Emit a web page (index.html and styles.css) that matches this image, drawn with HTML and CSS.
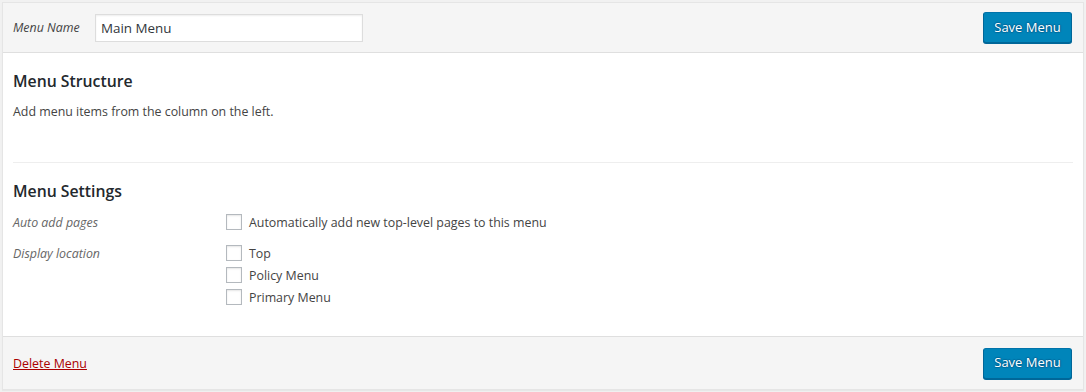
FILE: index.html
```html
<!DOCTYPE html>
<html>
<head>
<meta charset="utf-8">
<link rel="stylesheet" href="styles.css">
</head>
<body>
<div class="menu-edit">
  <div class="menu-header">
    <label class="name-label">Menu Name</label>
    <input class="name-input" type="text" value="Main Menu">
    <span class="spacer"></span>
    <button class="btn-primary">Save Menu</button>
  </div>
  <div class="menu-body">
    <h3 class="section-title">Menu Structure</h3>
    <p class="instructions">Add menu items from the column on the left.</p>
    <div class="menu-settings">
      <h3 class="section-title">Menu Settings</h3>
      <div class="settings-grid">
        <div class="set-label">Auto add pages</div>
        <div class="set-options">
          <label class="opt"><span class="checkbox"></span>Automatically add new top-level pages to this menu</label>
        </div>
        <div class="set-label">Display location</div>
        <div class="set-options">
          <label class="opt"><span class="checkbox"></span>Top</label>
          <label class="opt"><span class="checkbox"></span>Policy Menu</label>
          <label class="opt"><span class="checkbox"></span>Primary Menu</label>
        </div>
      </div>
    </div>
  </div>
  <div class="menu-footer">
    <a class="delete-link" href="#">Delete Menu</a>
    <span class="spacer"></span>
    <button class="btn-primary">Save Menu</button>
  </div>
</div>
</body>
</html>
```
FILE: styles.css
```css
html, body {
  margin: 0;
  padding: 0;
}
body {
  background: #f1f1f1;
  padding: 2px;
  font-family: "Open Sans", "Noto Sans", sans-serif;
  font-size: 12.4px;
  color: #444;
}
.menu-edit {
  border: 1px solid #e5e5e5;
  background: #fff;
  box-shadow: 0 1px 1px rgba(0,0,0,.04);
  width: 1080px;
}
.menu-header {
  display: flex;
  align-items: center;
  height: 49px;
  padding: 0 11px 0 10px;
  background: #f5f5f5;
  border-bottom: 1px solid #dfdfdf;
}
.name-label {
  font-style: italic;
  color: #444;
  width: 82px;
}
.name-input {
  box-sizing: border-box;
  width: 268px;
  height: 28px;
  border: 1px solid #ddd;
  box-shadow: inset 0 1px 2px rgba(0,0,0,.07);
  padding: 3px 5px;
  font-family: inherit;
  font-size: 13.4px;
  color: #32373c;
  background: #fff;
  outline: none;
}
.spacer { flex: 1; }
.btn-primary {
  box-sizing: border-box;
  height: 31px;
  width: 89px;
  padding: 0 6px 2px;
  background: #0085ba;
  border: 1px solid #0073aa;
  border-color: #0073aa #006799 #006799;
  border-radius: 3px;
  box-shadow: 0 1px 0 #006799;
  color: #fff;
  font-family: inherit;
  font-size: 13px;
  text-shadow: 0 -1px 1px #006799, 1px 0 1px #006799, 0 1px 1px #006799, -1px 0 1px #006799;
  cursor: pointer;
}
.menu-body {
  padding: 0 10px;
  height: 283px;
  border-bottom: 1px solid #dfdfdf;
}
.section-title {
  margin: 0;
  font-size: 15.8px;
  font-weight: 600;
  color: #23282d;
}
.menu-body > .section-title {
  padding-top: 17px;
}
.instructions {
  margin: 11px 0 0;
  height: 59px;
}
.menu-settings {
  border-top: 1px solid #eee;
  padding-top: 17px;
}
.settings-grid {
  display: grid;
  grid-template-columns: 213px 1fr;
  row-gap: 14px;
  margin-top: 12px;
}
.set-label {
  font-style: italic;
  color: #666;
}
.set-options {
  display: flex;
  flex-direction: column;
  gap: 6px;
}
.opt {
  display: flex;
  align-items: center;
  height: 16px;
}
.checkbox {
  box-sizing: border-box;
  width: 16px;
  height: 16px;
  border: 1px solid #b4b9be;
  background: #fff;
  box-shadow: inset 0 1px 2px rgba(0,0,0,.1);
  margin-right: 7px;
  flex: none;
}
.menu-footer {
  display: flex;
  align-items: center;
  height: 52px;
  padding: 0 11px 0 10px;
  background: #f5f5f5;
}
.delete-link {
  color: #a00;
  text-decoration: underline;
}
```
